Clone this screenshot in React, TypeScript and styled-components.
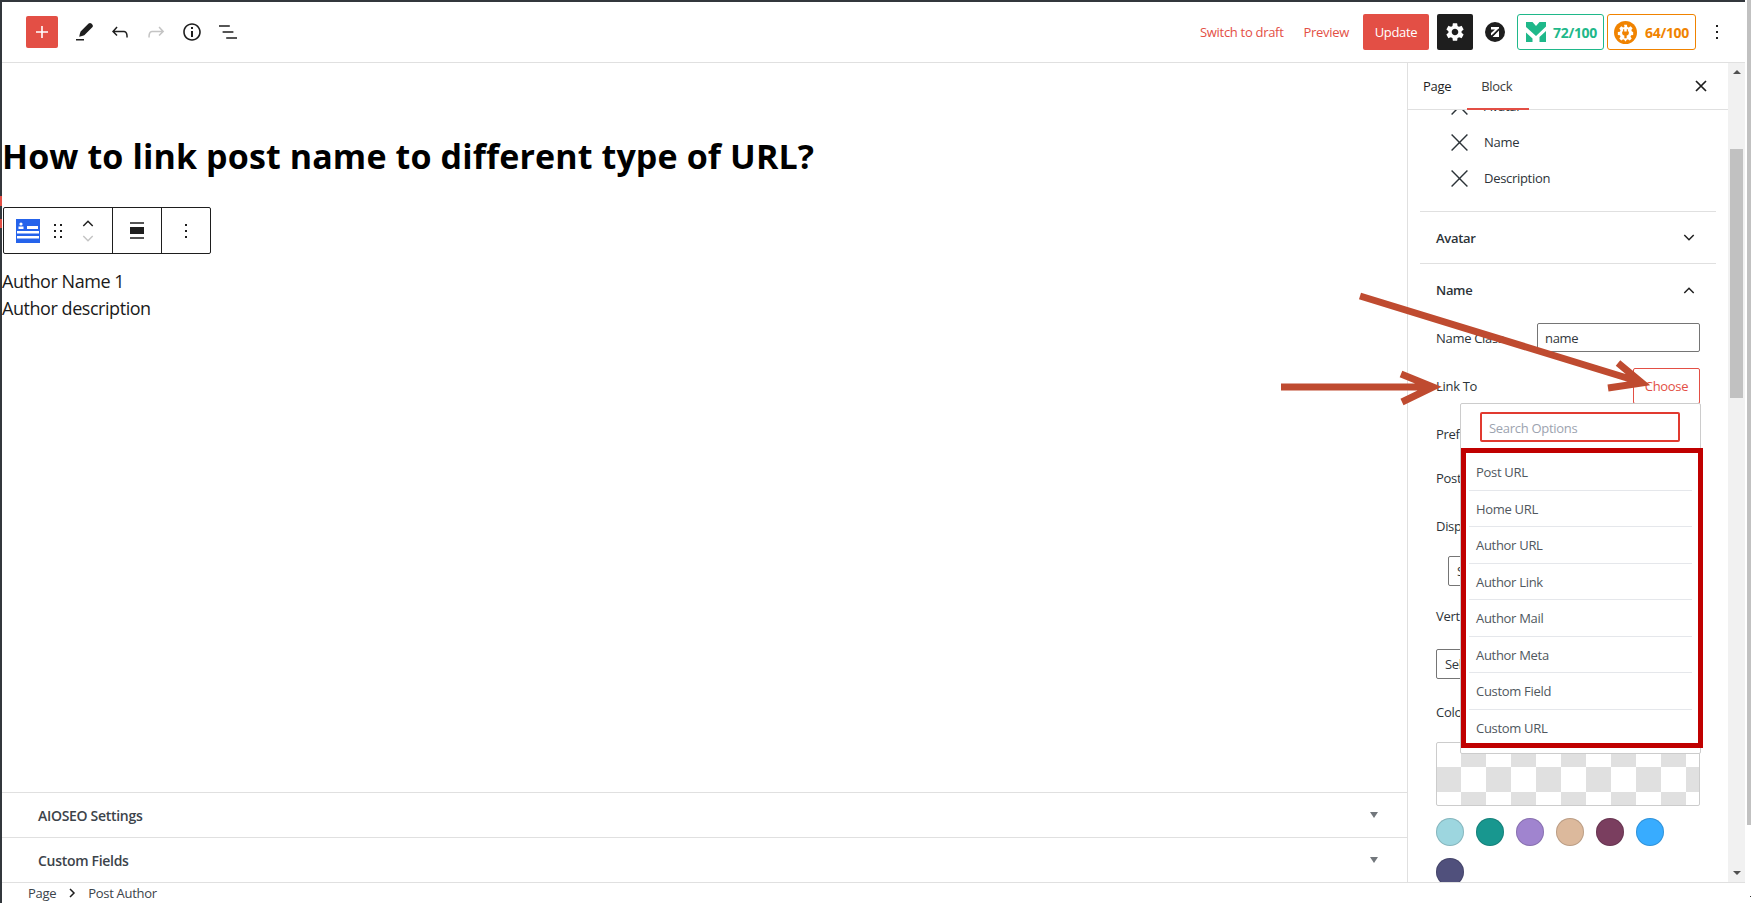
import React from "react";
import styled, { createGlobalStyle } from "styled-components";
import { MdSettings } from "react-icons/md";

const GlobalStyle = createGlobalStyle`
  html, body {
    margin: 0;
    padding: 0;
    height: 100%;
    overflow: hidden;
    background: #fff;
  }
  * {
    box-sizing: border-box;
  }
`;

const RED = "#e34f45";
const LINE = "#e0e0e0";

const Page = styled.div`
  position: relative;
  display: flex;
  width: 1751px;
  height: 903px;
  overflow: hidden;
  font-family: "Open Sans", "Noto Sans", sans-serif;
  font-size: 13px;
  letter-spacing: -0.3px;
  color: #1e1e1e;
`;

const Editor = styled.div`
  display: flex;
  flex-direction: column;
  width: 1745px;
  height: 903px;
  border-top: 2px solid #32373c;
  border-left: 2px solid #32373c;
`;

const OuterTrack = styled.div`
  position: relative;
  width: 6px;
  padding-left: 2px;
`;

const OuterThumb = styled.div`
  width: 4px;
  height: 825px;
  background: #c1c1c1;
`;

const OuterDot = styled.span`
  position: absolute;
  right: 0;
  top: 896px;
  width: 1px;
  height: 1px;
  background: #333;
`;

const BorderMark = styled.div<{ $top: number; $height: number }>`
  position: absolute;
  left: 0;
  top: ${(p) => p.$top}px;
  width: 2px;
  height: ${(p) => p.$height}px;
  background: ${RED};
`;

/* top bar */
const Header = styled.header`
  flex: 0 0 61px;
  display: flex;
  align-items: center;
  justify-content: space-between;
  padding: 0 16px 0 24px;
  border-bottom: 1px solid ${LINE};
`;

const ToolGroup = styled.div`
  display: flex;
  align-items: center;
`;

const AddButton = styled.button`
  display: flex;
  align-items: center;
  justify-content: center;
  width: 32px;
  height: 32px;
  margin-right: 8px;
  padding: 0;
  border: 0;
  border-radius: 2px;
  background: ${RED};
  color: #fff;
`;

const ToolIcon = styled.span<{ $muted?: boolean }>`
  display: flex;
  align-items: center;
  justify-content: center;
  width: 36px;
  height: 36px;
  color: ${(p) => (p.$muted ? "#c4c4c4" : "#1e1e1e")};
`;

const TextLink = styled.a<{ $gap: number }>`
  margin-right: ${(p) => p.$gap}px;
  color: ${RED};
  font-size: 13px;
  white-space: nowrap;
`;

const UpdateButton = styled.button`
  width: 66px;
  height: 36px;
  margin-right: 8px;
  padding: 0;
  border: 0;
  border-radius: 2px;
  background: ${RED};
  color: #fff;
  font: inherit;
  letter-spacing: inherit;
`;

const SettingsButton = styled.button`
  display: flex;
  align-items: center;
  justify-content: center;
  width: 36px;
  height: 36px;
  margin-right: 12px;
  padding: 0;
  border: 0;
  border-radius: 2px;
  background: #1e1e1e;
  color: #fff;
`;

const ScoreBadge = styled.div<{ $color: string; $width: number; $gap: number; $pad: number }>`
  display: flex;
  align-items: center;
  justify-content: space-between;
  width: ${(p) => p.$width}px;
  height: 36px;
  margin-left: ${(p) => p.$gap}px;
  padding: 0 6px 0 ${(p) => p.$pad}px;
  border: 1px solid ${(p) => p.$color};
  border-radius: 3px;
  color: ${(p) => p.$color};
  font-size: 14px;
  font-weight: 700;
`;

const MoreButton = styled.span`
  display: flex;
  align-items: center;
  justify-content: center;
  width: 24px;
  height: 36px;
  margin-left: 9px;
`;

/* body */
const Body = styled.div`
  flex: 1;
  min-height: 0;
  display: flex;
`;

const Main = styled.main`
  flex: 0 0 1405px;
  display: flex;
  flex-direction: column;
`;

const Canvas = styled.div`
  flex: 1;
  padding-top: 69px;
`;

const Title = styled.h1`
  margin: 0;
  font-size: 34px;
  line-height: 48px;
  font-weight: 700;
  letter-spacing: 0.12px;
  color: #000;
`;

const BlockToolbar = styled.div`
  display: flex;
  width: 208px;
  height: 47px;
  margin: 27px 0 0 1px;
  border: 1px solid #1e1e1e;
  border-radius: 2px;
  background: #fff;
`;

const ToolbarGroup = styled.div<{ $width: number; $start?: boolean }>`
  display: flex;
  align-items: center;
  justify-content: ${(p) => (p.$start ? "flex-start" : "center")};
  padding-left: ${(p) => (p.$start ? 12 : 0)}px;
  flex: 0 0 ${(p) => p.$width}px;
  & + & {
    border-left: 1px solid #1e1e1e;
  }
`;

const MoverStack = styled.div`
  display: flex;
  flex-direction: column;
  align-items: center;
  gap: 8px;
  margin-left: 20px;
`;

const DragHandle = styled.div`
  margin-left: 14px;
  display: flex;
`;

const BlockText = styled.p`
  margin: 0;
  font-size: 18px;
  line-height: 26.5px;
  letter-spacing: -0.45px;
  color: #1a1a1a;
  &:first-of-type {
    margin-top: 14px;
  }
`;

const MetaRow = styled.div`
  flex: 0 0 45px;
  display: flex;
  align-items: center;
  justify-content: space-between;
  padding: 0 29px 0 36px;
  border-top: 1px solid ${LINE};
  font-size: 14px;
  font-weight: 600;
  color: #3c434a;
`;

const Caret = styled.span`
  width: 0;
  height: 0;
  border-left: 4px solid transparent;
  border-right: 4px solid transparent;
  border-top: 6px solid #72777c;
`;

/* sidebar */
const Sidebar = styled.aside`
  flex: 0 0 321px;
  display: flex;
  flex-direction: column;
  border-left: 1px solid ${LINE};
  min-height: 0;
`;

const SidebarTabs = styled.div`
  position: relative;
  flex: 0 0 47px;
  display: flex;
  align-items: center;
  padding-left: 15px;
  border-bottom: 1px solid ${LINE};
`;

const Tab = styled.span<{ $active?: boolean }>`
  margin-right: 30px;
  color: ${(p) => (p.$active ? "#3c3c3c" : "#1e1e1e")};
  font-size: 13px;
  &::after {
    content: "";
    display: ${(p) => (p.$active ? "block" : "none")};
    position: absolute;
    left: 59px;
    bottom: -1px;
    width: 62px;
    height: 2px;
    background: ${RED};
  }
`;

const CloseIcon = styled.span`
  position: absolute;
  right: 21px;
  top: 17px;
  display: flex;
`;

const SidebarScroll = styled.div`
  flex: 1;
  min-height: 0;
  overflow: hidden;
  padding: 0 12px;
`;

const ElementRow = styled.div`
  display: flex;
  align-items: center;
  gap: 15px;
  height: 36px;
  padding-left: 30px;
  color: #2c3338;
  &:first-child {
    margin-top: -22px;
  }
`;

const PanelHeader = styled.div<{ $top: boolean; $height: number }>`
  display: flex;
  align-items: center;
  justify-content: space-between;
  height: ${(p) => p.$height}px;
  margin-top: ${(p) => (p.$top ? 15 : 0)}px;
  padding: 0 21px 0 16px;
  border-top: 1px solid ${LINE};
  font-weight: 600;
  color: #2c3338;
`;

const PanelBody = styled.div`
  display: flex;
  flex-direction: column;
  padding: 0 16px;
`;

const FieldRow = styled.div<{ $top: number; $height: number }>`
  display: flex;
  align-items: center;
  justify-content: space-between;
  height: ${(p) => p.$height}px;
  margin-top: ${(p) => p.$top}px;
  color: #2c3338;
`;

const TextInput = styled.div`
  display: flex;
  align-items: center;
  width: 163px;
  height: 29px;
  padding: 1px 0 0 7px;
  border: 1px solid #757575;
  border-radius: 2px;
  color: #32373c;
`;

const ChooseWrap = styled.div`
  position: relative;
`;

const ChooseButton = styled.div`
  display: flex;
  align-items: center;
  justify-content: center;
  width: 67px;
  height: 36px;
  border: 1px solid ${RED};
  border-radius: 2px;
  color: ${RED};
`;

const SelectBox = styled.div<{ $indent: number; $top: number }>`
  display: flex;
  align-items: center;
  height: 30px;
  margin-top: ${(p) => p.$top}px;
  margin-left: ${(p) => p.$indent}px;
  padding-left: 8px;
  border: 1px solid #757575;
  border-radius: 2px;
  color: #32373c;
`;

const Checker = styled.div`
  height: 64px;
  margin-top: 20px;
  border: 1px solid #ccc;
  border-radius: 2px;
  background-color: #fff;
  background-image: repeating-conic-gradient(#e0e0e0 0 25%, #fff 0 50%);
  background-size: 50px 50px;
  background-position: -1px -1px;
`;

const Swatches = styled.div`
  display: flex;
  flex-wrap: wrap;
  gap: 12px;
  margin-top: 12px;
`;

const Swatch = styled.span<{ $color: string }>`
  width: 28px;
  height: 28px;
  border-radius: 50%;
  background: ${(p) => p.$color};
  box-shadow: inset 0 0 0 1px rgba(0, 0, 0, 0.15);
`;

const Scrollbar = styled.div`
  flex: 0 0 17px;
  display: flex;
  flex-direction: column;
  align-items: center;
  background: #f1f1f1;
  position: relative;
`;

const ScrollArrow = styled.span<{ $down?: boolean }>`
  position: absolute;
  ${(p) => (p.$down ? "bottom: 7px;" : "top: 7px;")}
  width: 0;
  height: 0;
  border-left: 4px solid transparent;
  border-right: 4px solid transparent;
  ${(p) => (p.$down ? "border-top: 4px solid #505050;" : "border-bottom: 4px solid #505050;")}
`;

const ScrollThumb = styled.div`
  width: 13px;
  height: 249px;
  margin-top: 86px;
  background: #c1c1c1;
`;

/* dropdown */
const Dropdown = styled.div`
  position: absolute;
  top: 35px;
  right: -1px;
  z-index: 2;
  width: 241px;
  height: 351px;
  padding: 8px 8px 0;
  border: 1px solid #ccc;
  border-radius: 2px;
  background: #fff;
`;

const SearchBox = styled.div`
  display: flex;
  align-items: center;
  width: 200px;
  height: 30px;
  margin-left: 11px;
  padding: 1px 0 0 7px;
  border: 2px solid #e13a30;
  border-radius: 2px;
  color: #9ca3af;
`;

const OptionList = styled.ul`
  margin: 12px 0 0;
  padding: 0;
  list-style: none;
`;

const OptionItem = styled.li`
  display: flex;
  align-items: center;
  height: 36.5px;
  padding: 1px 0 0 7px;
  border-bottom: 1px solid #e5e7eb;
  color: #50575e;
  &:last-child {
    border-bottom: 0;
  }
`;

const Highlight = styled.div`
  position: absolute;
  left: 0;
  top: 44px;
  width: 242px;
  height: 300px;
  border: 5px solid #c00000;
  pointer-events: none;
`;

const Annotations = styled.svg`
  position: absolute;
  left: 0;
  top: 0;
  z-index: 3;
  pointer-events: none;
`;

/* footer */
const Footer = styled.footer`
  flex: 0 0 21px;
  display: flex;
  align-items: center;
  gap: 12px;
  padding-left: 26px;
  border-top: 1px solid ${LINE};
  font-size: 13px;
  color: #3c434a;
`;

const XIcon = ({ size = 24, weight = 1.5 }: { size?: number; weight?: number }) => (
  <svg width={size} height={size} viewBox="0 0 24 24" fill="none" stroke="currentColor" strokeWidth={weight}>
    <path d="M2 2L22 22M22 2L2 22" />
  </svg>
);

const Chevron = ({ up, color = "#1e1e1e" }: { up?: boolean; color?: string }) => (
  <svg width="12" height="7" viewBox="0 0 14 8" fill="none" stroke={color} strokeWidth={1.7}>
    <path d={up ? "M1.5 7L7 1.5L12.5 7" : "M1.5 1L7 6.5L12.5 1"} />
  </svg>
);

const Glyph = ({ d }: { d: string }) => (
  <svg width="24" height="24" viewBox="0 0 24 24" fill="currentColor">
    <path d={d} />
  </svg>
);

const PENCIL = "M4 20.5h8V19H4zM19.4 3.6c-.8-.8-2-.8-2.8 0l-8 8c-.5 1.4-1 3-1.4 5.1 2.100-.4 3.700-.9 5.100-1.400l8-8c.8-.8.8-2 0-2.800z";
const UNDO = "M18.3 11.7c-.6-.6-1.400-.9-2.300-.9H6.700l2.900-3.300-1.100-1-4.500 5L8.500 16l1-1-2.700-2.700H16c.5 0 .9.2 1.300.5 1 1 1 3.400 1 4.500v.3h1.500v-.2c0-1.500 0-4.300-1.500-5.700z";
const REDO = "M15.600 6.500l-1.100 1 2.900 3.300H8c-.9 0-1.700.3-2.300.9-1.400 1.500-1.400 4.200-1.400 5.600v.2h1.500v-.3c0-1.100 0-3.500 1-4.500.3-.3.7-.5 1.300-.5h9.200L14.500 15l1.100 1.100 4.600-4.600-4.600-5z";
const INFO = "M12 3.200c-4.800 0-8.800 3.900-8.800 8.800 0 4.800 3.900 8.800 8.800 8.800 4.800 0 8.800-3.900 8.800-8.800 0-4.800-4-8.800-8.800-8.800zm0 16c-4 0-7.200-3.300-7.200-7.200C4.800 8 8 4.800 12 4.800s7.200 3.300 7.200 7.200c0 4-3.200 7.200-7.200 7.200zM11 17h2v-6h-2v6zm0-8h2V7h-2v2z";
const LIST = "M13.800 5.200H3v1.500h10.800V5.200zm-3.600 12v1.500H21v-1.500H10.200zm7.200-6H6.600v1.500h10.800v-1.500z";

const PostAuthorIcon = () => (
  <svg width="24" height="24" viewBox="0 0 24 24">
    <rect width="24" height="24" fill="#2563eb" />
    <circle cx="5" cy="5" r="1.600" fill="#fff" />
    <rect x="2.500" y="7.500" width="5" height="2.500" fill="#fff" />
    <rect x="11" y="7" width="11" height="3" fill="#fff" />
    <rect x="1" y="12" width="22" height="2.500" fill="#fff" />
    <rect x="1" y="17" width="22" height="2.500" fill="#fff" />
  </svg>
);

const DragDots = () => (
  <svg width="8" height="14" viewBox="0 0 8 14" fill="#1e1e1e">
    <path d="M0 0h2v2H0zM6 0h2v2H6zM0 6h2v2H0zM6 6h2v2H6zM0 12h2v2H0zM6 12h2v2H6z" />
  </svg>
);

const AlignWide = () => (
  <svg width="14" height="17" viewBox="0 0 14 17" fill="#1e1e1e">
    <path d="M0 0h14v2H0z" fill="#555" />
    <path d="M0 5h14v7H0z" />
    <path d="M0 15h14v2H0z" fill="#555" />
  </svg>
);

const VDots = () => (
  <svg width="2" height="14" viewBox="0 0 2 14" fill="#1e1e1e">
    <path d="M0 0h2v2H0zM0 6h2v2H0zM0 12h2v2H0z" />
  </svg>
);

const ZLogo = () => (
  <svg width="20" height="20" viewBox="0 0 20 20">
    <circle cx="10" cy="10" r="10" fill="#1e1e1e" />
    <path d="M6 5h8v2.500L9 12l-3 1.500V11l4-3.500H6zM14 8.500V15H7.500z" fill="#fff" />
    <path d="M6 15l8-8" stroke="#1e1e1e" strokeWidth="1.200" />
  </svg>
);

const MLogo = () => (
  <svg width="20" height="20" viewBox="0 0 20 20" fill="#1fb88a">
    <path d="M0 0h6.500L10 4l3.500-4H20v4.500l-10 9.500L0 5z" />
    <path d="M0 10.500l6.500 6V20H0zM13.500 15l6.500-6v11h-6.500z" />
  </svg>
);

const GearPlug = () => (
  <svg width="23" height="23" viewBox="0 0 24 24">
    <circle cx="12" cy="12" r="12" fill="#f08300" />
    <path
      fill="#fff"
      d="M10.500 4h3l.4 2.200 1.500.6 1.900-1.300 2.100 2.100-1.300 1.900.6 1.500L20 11.500v3l-2.200.4-.6 1.500 1.300 1.900-2.100 2.100-1.900-1.300-1.500.6-.5 1.300h-1l-.5-1.300-1.500-.6-1.900 1.300-2.100-2.100 1.300-1.900-.6-1.500L4 14.500v-3l2.200-.4.6-1.500-1.300-1.900 2.100-2.100 1.900 1.300 1.500-.6z"
    />
    <path fill="#f08300" d="M9.500 8.500h1.200v2.500h2.600V8.500h1.200V11h1v1.500c0 1.500-1 2.500-2.300 2.700V18h-2.400v-2.800c-1.300-.2-2.300-1.200-2.300-2.700V11h1z" />
  </svg>
);

const elements = ["Avatar", "Name", "Description"];
const options = ["Post URL", "Home URL", "Author URL", "Author Link", "Author Mail", "Author Meta", "Custom Field", "Custom URL"];
const swatchColors = ["#9dd6df", "#18978f", "#a084cf", "#dcb99c", "#7a3e5f", "#38acff", "#50507c"];

export default function App() {
  return (
    <Page>
      <GlobalStyle />
      <Editor>
        <Header>
          <ToolGroup>
            <AddButton>
              <svg width="24" height="24" viewBox="0 0 24 24" fill="currentColor">
                <path d="M18 11.200h-5.200V6h-1.600v5.200H6v1.600h5.200V18h1.600v-5.200H18z" />
              </svg>
            </AddButton>
            <ToolIcon><Glyph d={PENCIL} /></ToolIcon>
            <ToolIcon><Glyph d={UNDO} /></ToolIcon>
            <ToolIcon $muted><Glyph d={REDO} /></ToolIcon>
            <ToolIcon><Glyph d={INFO} /></ToolIcon>
            <ToolIcon><Glyph d={LIST} /></ToolIcon>
          </ToolGroup>
          <ToolGroup>
            <TextLink $gap={20}>Switch to draft</TextLink>
            <TextLink $gap={14}>Preview</TextLink>
            <UpdateButton>Update</UpdateButton>
            <SettingsButton><MdSettings size={22} /></SettingsButton>
            <ZLogo />
            <ScoreBadge $color="#1fb88a" $width={87} $gap={12} $pad={8}>
              <MLogo />
              <span>72/100</span>
            </ScoreBadge>
            <ScoreBadge $color="#f08300" $width={89} $gap={3} $pad={6}>
              <GearPlug />
              <span>64/100</span>
            </ScoreBadge>
            <MoreButton><VDots /></MoreButton>
          </ToolGroup>
        </Header>
        <Body>
          <Main>
            <Canvas>
              <Title>How to link post name to different type of URL?</Title>
              <BlockToolbar>
                <ToolbarGroup $width={108} $start>
                  <PostAuthorIcon />
                  <DragHandle><DragDots /></DragHandle>
                  <MoverStack>
                    <Chevron up />
                    <Chevron color="#c4c4c4" />
                  </MoverStack>
                </ToolbarGroup>
                <ToolbarGroup $width={49}><AlignWide /></ToolbarGroup>
                <ToolbarGroup $width={49}><VDots /></ToolbarGroup>
              </BlockToolbar>
              <BlockText>Author Name 1</BlockText>
              <BlockText>Author description</BlockText>
            </Canvas>
            <MetaRow>AIOSEO Settings<Caret /></MetaRow>
            <MetaRow>Custom Fields<Caret /></MetaRow>
          </Main>
          <Sidebar>
            <SidebarTabs>
              <Tab>Page</Tab>
              <Tab $active>Block</Tab>
              <CloseIcon><XIcon size={12} weight={3.4} /></CloseIcon>
            </SidebarTabs>
            <SidebarScroll>
              {elements.map((item) => (
                <ElementRow key={item}><XIcon size={19} weight={1.8} />{item}</ElementRow>
              ))}
              <PanelHeader $top $height={52}>Avatar<Chevron /></PanelHeader>
              <PanelHeader $top={false} $height={53}>Name<Chevron up /></PanelHeader>
              <PanelBody>
                <FieldRow $top={7} $height={29}>
                  Name Class
                  <TextInput>name</TextInput>
                </FieldRow>
                <FieldRow $top={16} $height={36}>
                  Link To
                  <ChooseWrap>
                    <ChooseButton>Choose</ChooseButton>
                    <Dropdown>
                      <SearchBox>Search Options</SearchBox>
                      <OptionList>
                        {options.map((option) => (
                          <OptionItem key={option}>{option}</OptionItem>
                        ))}
                      </OptionList>
                      <Highlight />
                    </Dropdown>
                  </ChooseWrap>
                </FieldRow>
                <FieldRow $top={20} $height={20}>Prefix</FieldRow>
                <FieldRow $top={24} $height={20}>Postfix</FieldRow>
                <FieldRow $top={28} $height={20}>Display</FieldRow>
                <SelectBox $indent={12} $top={20}>Select</SelectBox>
                <FieldRow $top={20} $height={20}>Vertical Align</FieldRow>
                <SelectBox $indent={0} $top={23}>Select</SelectBox>
                <FieldRow $top={23} $height={20}>Color</FieldRow>
                <Checker />
                <Swatches>
                  {swatchColors.map((color) => (
                    <Swatch key={color} $color={color} />
                  ))}
                </Swatches>
              </PanelBody>
            </SidebarScroll>
          </Sidebar>
          <Scrollbar>
            <ScrollArrow />
            <ScrollThumb />
            <ScrollArrow $down />
          </Scrollbar>
        </Body>
        <Footer>
          <span>Page</span>
          <svg width="8" height="10" viewBox="0 0 8 10" fill="none" stroke="#1e1e1e" strokeWidth="1.500">
            <path d="M2 1l4 4-4 4" />
          </svg>
          <span>Post Author</span>
        </Footer>
      </Editor>
      <OuterTrack>
        <OuterThumb />
        <OuterDot />
      </OuterTrack>
      <BorderMark $top={196} $height={10} />
      <BorderMark $top={219} $height={9} />
      <Annotations width="1751" height="903" fill="none" stroke="#bf4b30" strokeWidth="7">
        <path d="M1281 387H1432M1401 374L1433 387L1402 402" />
        <path d="M1360 296L1640 382M1618 363L1642 383L1608 388" />
      </Annotations>
    </Page>
  );
}
